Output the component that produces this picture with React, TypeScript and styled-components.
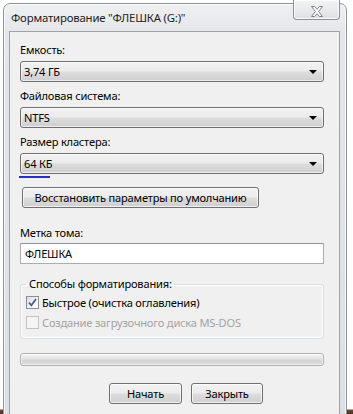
import React from "react";
import styled, { createGlobalStyle } from "styled-components";

const GlobalStyle = createGlobalStyle`
  html, body {
    margin: 0;
    padding: 0;
    background: #ffffff;
  }
  body {
    font-family: "Noto Sans", "Open Sans", "Liberation Sans", sans-serif;
    font-size: 11.1px;
    letter-spacing: -0.2px;
    color: #000;
  }
`;

const Page = styled.div`
  width: 353px;
  height: 414px;
  overflow: hidden;
  background: linear-gradient(to bottom, #ffffff 0, #ffffff 409px, #6a4a38 410px, #4a3024 414px);
  padding: 3px 0 0 3px;
  box-sizing: border-box;
`;

const Window = styled.div`
  width: 344px;
  height: 420px;
  box-sizing: border-box;
  border: 1px solid #8f949a;
  border-radius: 7px 7px 0 0;
  background: linear-gradient(to bottom, #eef0f2 0, #e4e6e9 30px, #dcdfe2 100%);
  box-shadow: inset 0 0 0 1px rgba(255, 255, 255, 0.7);
  display: flex;
  flex-direction: column;
  padding: 0 6px 0 5px;
`;

const TitleBar = styled.div`
  height: 27px;
  display: flex;
  align-items: flex-start;
  justify-content: space-between;
`;

const Title = styled.div`
  padding: 5px 0 0 2px;
  font-size: 11.4px;
  line-height: 18px;
  color: #1e1e1e;
  white-space: nowrap;
`;

const CloseButton = styled.div`
  width: 47px;
  height: 20px;
  margin-top: -4px;
  box-sizing: border-box;
  border: 1px solid #8d9196;
  border-top: none;
  border-radius: 0 0 4px 4px;
  background: linear-gradient(to bottom, #f3f4f5 0, #e8eaec 50%, #dde0e3 100%);
  box-shadow: inset 0 0 0 1px rgba(255, 255, 255, 0.8);
  display: flex;
  align-items: center;
  justify-content: center;
  padding-top: 3px;
`;

const Client = styled.div`
  flex: 1;
  border: 1px solid #9ea3a8;
  background: #f0f0f0;
  padding: 10px 15px 0 10px;
  display: flex;
  flex-direction: column;
  white-space: nowrap;
`;

const Label = styled.div`
  height: 16px;
  line-height: 16px;
  margin-bottom: 3px;
`;

const Combo = styled.div<{ $last?: boolean }>`
  height: 21px;
  box-sizing: border-box;
  border: 1px solid #707070;
  border-radius: 3px;
  background: linear-gradient(to bottom, #f2f2f2 0, #ebebeb 48%, #dddddd 52%, #cfcfcf 100%);
  box-shadow: inset 0 0 0 1px rgba(255, 255, 255, 0.6);
  display: flex;
  align-items: center;
  justify-content: space-between;
  padding: 0 6px 0 3px;
  margin-bottom: ${(p) => (p.$last ? 0 : 6)}px;
  line-height: 16px;
`;

const Arrow = styled.span`
  width: 0;
  height: 0;
  border-left: 4px solid transparent;
  border-right: 4px solid transparent;
  border-top: 4px solid #000;
`;

const Underline = styled.div`
  width: 31px;
  height: 2px;
  margin: 2px 0 0 -1px;
  background: #2a2fc4;
`;

const Button = styled.div<{ $width: number }>`
  width: ${(p) => p.$width}px;
  height: 21px;
  box-sizing: border-box;
  border: 1px solid #707070;
  border-radius: 3px;
  background: linear-gradient(to bottom, #f2f2f2 0, #ebebeb 48%, #dddddd 52%, #cfcfcf 100%);
  box-shadow: inset 0 0 0 1px rgba(255, 255, 255, 0.7);
  display: flex;
  align-items: center;
  justify-content: center;
  line-height: 16px;
`;

const ResetButton = styled(Button)`
  margin: 9px 0 0 2px;
`;

const VolumeLabel = styled(Label)`
  margin-top: 17px;
  margin-bottom: 2px;
`;

const TextInput = styled.div`
  height: 21px;
  box-sizing: border-box;
  border: 1px solid #abadb3;
  border-top-color: #8f9398;
  background: #ffffff;
  display: flex;
  align-items: center;
  padding: 0 4px;
  line-height: 16px;
`;

const Group = styled.fieldset`
  margin: 12px 0 0 0;
  padding: 0 7px 6px 5px;
  border: 1px solid #d5dfe5;
  border-radius: 3px;
  box-shadow: inset 0 0 0 1px #ffffff;
  min-width: 0;
`;

const Legend = styled.legend`
  padding: 0 2px 0 3px;
  line-height: 16px;
`;

const CheckRow = styled.label<{ $disabled?: boolean }>`
  height: 20px;
  display: flex;
  align-items: center;
  gap: 3px;
  color: ${(p) => (p.$disabled ? "#a3a3a3" : "#000")};
`;

const Box = styled.span<{ $disabled?: boolean }>`
  width: 13px;
  height: 13px;
  box-sizing: border-box;
  border: 1px solid ${(p) => (p.$disabled ? "#c2c2c2" : "#8e8f8f")};
  background: ${(p) =>
    p.$disabled
      ? "#f4f4f4"
      : "linear-gradient(135deg, #dcdcdc 0, #f4f4f4 60%, #ffffff 100%)"};
  display: flex;
  align-items: center;
  justify-content: center;
  flex: none;
`;

const Progress = styled.div`
  height: 13px;
  margin-top: 14px;
  box-sizing: border-box;
  border: 1px solid #b2b2b2;
  border-radius: 3px;
  background: linear-gradient(to bottom, #f3f3f3 0, #e4e4e4 45%, #d4d4d4 55%, #dcdcdc 100%);
  box-shadow: inset 0 0 0 1px rgba(255, 255, 255, 0.6);
`;

const Actions = styled.div`
  display: flex;
  gap: 9px;
  margin-top: 17px;
  padding-left: 89px;
`;

function Check() {
  return (
    <svg width="9" height="9" viewBox="0 0 9 9">
      <path d="M1 4.6 L3.4 7.4 L8 1" fill="none" stroke="#4a5f97" strokeWidth="1.8" />
    </svg>
  );
}

function CloseGlyph() {
  return (
    <svg width="12" height="11" viewBox="0 0 12 11">
      <path
        d="M0.5 0.5 H3.6 L6 3.3 L8.4 0.5 H11.5 L7.6 5.5 L11.5 10.5 H8.4 L6 7.7 L3.6 10.5 H0.5 L4.4 5.5 Z"
        fill="#ffffff"
        stroke="#7b8087"
        strokeWidth="1"
        strokeLinejoin="round"
      />
    </svg>
  );
}

export default function App() {
  return (
    <>
      <GlobalStyle />
      <Page>
        <Window>
          <TitleBar>
            <Title>Форматирование "ФЛЕШКА (G:)"</Title>
            <CloseButton>
              <CloseGlyph />
            </CloseButton>
          </TitleBar>
          <Client>
            <Label>Емкость:</Label>
            <Combo>
              <span>3,74 ГБ</span>
              <Arrow />
            </Combo>
            <Label>Файловая система:</Label>
            <Combo>
              <span>NTFS</span>
              <Arrow />
            </Combo>
            <Label>Размер кластера:</Label>
            <Combo $last>
              <span>64 КБ</span>
              <Arrow />
            </Combo>
            <Underline />
            <ResetButton $width={237}>Восстановить параметры по умолчанию</ResetButton>
            <VolumeLabel>Метка тома:</VolumeLabel>
            <TextInput>ФЛЕШКА</TextInput>
            <Group>
              <Legend>Способы форматирования:</Legend>
              <CheckRow>
                <Box>
                  <Check />
                </Box>
                Быстрое (очистка оглавления)
              </CheckRow>
              <CheckRow $disabled>
                <Box $disabled />
                Создание загрузочного диска MS-DOS
              </CheckRow>
            </Group>
            <Progress />
            <Actions>
              <Button $width={73}>Начать</Button>
              <Button $width={72}>Закрыть</Button>
            </Actions>
          </Client>
        </Window>
      </Page>
    </>
  );
}
